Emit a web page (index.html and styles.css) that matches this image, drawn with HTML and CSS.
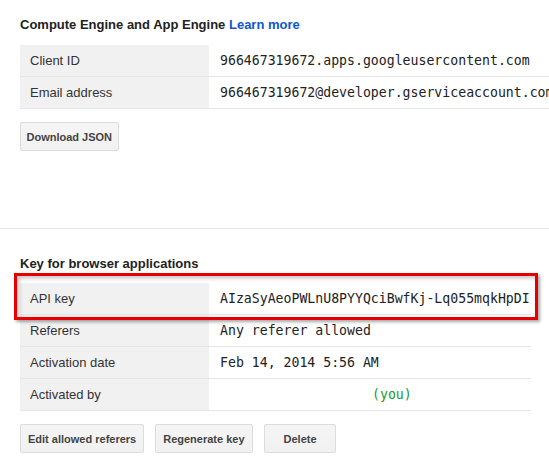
FILE: index.html
```html
<!DOCTYPE html>
<html>
<head>
<meta charset="utf-8">
<link rel="stylesheet" href="styles.css">
</head>
<body>
<section class="section first">
  <h2 class="title">Compute Engine and App Engine <a class="link" href="#">Learn more</a></h2>
  <table class="kv">
    <tr><td class="label">Client ID</td><td class="value">966467319672.apps.googleusercontent.com</td></tr>
    <tr><td class="label">Email address</td><td class="value">966467319672@developer.gserviceaccount.com</td></tr>
  </table>
  <div class="actions"><button class="btn btn-download">Download JSON</button></div>
</section>
<section class="section second">
  <h2 class="title">Key for browser applications</h2>
  <div class="table-wrap">
    <table class="kv">
      <tr><td class="label">API key</td><td class="value">AIzaSyAeoPWLnU8PYYQciBwfKj-Lq055mqkHpDI</td></tr>
      <tr><td class="label">Referers</td><td class="value">Any referer allowed</td></tr>
      <tr><td class="label">Activation date</td><td class="value">Feb 14, 2014 5:56 AM</td></tr>
      <tr><td class="label">Activated by</td><td class="value"><span class="you">(you)</span></td></tr>
    </table>
    <div class="highlight"></div>
  </div>
  <div class="actions">
    <button class="btn">Edit allowed referers</button>
    <button class="btn btn-regen">Regenerate key</button>
    <button class="btn btn-delete">Delete</button>
  </div>
</section>
</body>
</html>
```
FILE: styles.css
```css
html, body {
  margin: 0;
  padding: 0;
  background: #fff;
  overflow: hidden;
}
body {
  font-family: "Liberation Sans", Arial, sans-serif;
  font-size: 13px;
  color: #222;
}
.section {
  padding: 0 20px;
}
.first {
  padding-top: 17px;
  padding-bottom: 77px;
  border-bottom: 1px solid #e5e5e5;
  white-space: nowrap;
}
.second {
  padding-top: 27px;
}
.title {
  margin: 0;
  font-size: 13px;
  line-height: 16px;
  font-weight: bold;
  color: #222;
}
.link {
  color: #15c;
  text-decoration: none;
}
.kv {
  border-collapse: collapse;
  margin-top: 12px;
  white-space: nowrap;
  width: max-content;
}
.second .kv {
  margin-top: 0;
}
.table-wrap {
  position: relative;
  width: max-content;
  margin-top: 11px;
}
.kv td {
  height: 31px;
  padding: 0;
  border-bottom: 1px solid #e5e5e5;
  vertical-align: middle;
}
.label {
  width: 179px;
  min-width: 179px;
  background: #f1f1f1;
  padding-left: 10px !important;
  color: #333;
}
.value {
  padding: 0 1px 0 11px !important;
  font-family: "DejaVu Sans Mono", "Liberation Mono", monospace;
  font-size: 13.2px;
  color: #222;
}
.you {
  display: inline-block;
  margin-left: 152px;
  color: #1a9a1a;
}
.highlight {
  position: absolute;
  left: -6px;
  right: -7px;
  top: -10px;
  height: 41px;
  border: 3px solid #e80000;
  box-shadow: 2px 2px 3px rgba(0, 0, 0, 0.35), inset 2px 2px 4px rgba(0, 0, 0, 0.25);
  pointer-events: none;
}
.actions {
  display: flex;
  gap: 10px;
  margin-top: 13px;
}
.btn {
  box-sizing: border-box;
  height: 29px;
  min-width: 72px;
  padding: 0 7px;
  border: 1px solid #dcdcdc;
  border-radius: 2px;
  background: linear-gradient(#f5f5f5, #f1f1f1);
  font-family: "Liberation Sans", Arial, sans-serif;
  font-size: 11px;
  font-weight: bold;
  color: #444;
  cursor: default;
}
.btn-download {
  padding: 0 5.5px;
}
.btn-regen {
  margin-left: 1px;
  padding: 0 7.5px 0 7px;
}
.btn-delete {
  margin-left: 1px;
}
```
